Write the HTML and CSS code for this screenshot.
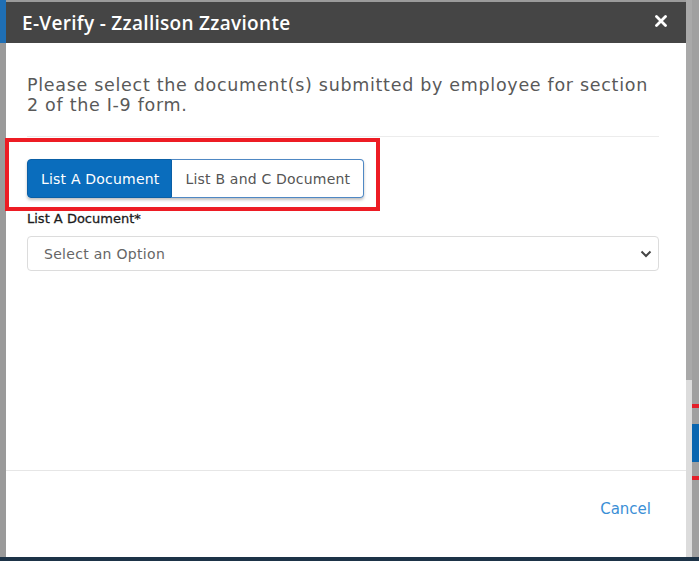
FILE: index.html
```html
<!DOCTYPE html>
<html lang="en">
<head>
    <meta charset="UTF-8">
    <title>E-Verify</title>
    <link rel="stylesheet" href="styles.css">
</head>
<body>
    <div class="page">
        <div class="backdrop-left"></div>

        <div class="modal">
            <div class="modal-header">
                <h2>E-Verify - Zzallison Zzavionte</h2>
                <svg class="close" width="12" height="12" viewBox="0 0 12 12"><path d="M1.5 1.5 L10.5 10.5 M10.5 1.5 L1.5 10.5" stroke="#fff" stroke-width="2.8" stroke-linecap="round"/></svg>
            </div>

            <div class="modal-body">
                <p class="intro">Please select the document(s) submitted by employee for section 2 of the I-9 form.</p>
                <hr>

                <div class="btn-group">
                    <button class="active">List A Document</button>
                    <button>List B and C Document</button>
                </div>

                <label for="doc">List A Document*</label>
                <div class="select">
                    <span>Select an Option</span>
                    <svg width="12" height="8" viewBox="0 0 12 8"><path d="M1.5 1.5 L6 6 L10.5 1.5" fill="none" stroke="#444" stroke-width="2"/></svg>
                </div>

                <!-- annotation -->
                <div class="highlight"></div>
            </div>

            <div class="modal-footer">
                <a href="#" class="cancel">Cancel</a>
            </div>
        </div>

        <div class="scrollbar"><div class="thumb"></div></div>
        <div class="backdrop-right">
            <div class="mark red m1"></div>
            <div class="mark blue"></div>
            <div class="mark red m2"></div>
        </div>
    </div>
    <div class="bottom-bar"></div>
</body>
</html>
```

FILE: styles.css
```css
body {
    margin: 0;
    font-family: "DejaVu Sans", "Open Sans", sans-serif;
    background-color: #9b9b9b;
    overflow: hidden;
}
.page {
    display: flex;
    height: 557px;
}
.backdrop-left {
    width: 6px;
    background: linear-gradient(#1f6fb5 0, #1f6fb5 43px, #9a9a9a 43px);
}
.modal {
    width: 680px;
    margin-top: 2px;
    background-color: #fff;
    display: flex;
    flex-direction: column;
}
.modal-header {
    height: 41px;
    background-color: #454545;
    display: flex;
    align-items: center;
    justify-content: space-between;
    padding: 0 19px 0 16px;
    flex-shrink: 0;
}
.modal-header h2 {
    margin: 0;
    color: #fff;
    font-family: "Open Sans", sans-serif;
    font-size: 19px;
    font-weight: 600;
    letter-spacing: 0.3px;
}
.close {
    margin-top: -4px;
}
.modal-body {
    position: relative;
    flex: 1;
    padding: 32px 27px 0 21px;
}
.intro {
    margin: 0;
    font-size: 17.5px;
    line-height: 20px;
    color: #595959;
    letter-spacing: 0.7px;
}
hr {
    border: none;
    border-top: 1px solid #ececec;
    margin: 21px 0 22px;
}
.btn-group {
    display: inline-flex;
    border-radius: 4px;
    box-shadow: 0 2px 3px rgba(0, 0, 0, 0.25);
}
.btn-group button {
    font-family: inherit;
    font-size: 14px;
    letter-spacing: 0.2px;
    height: 39px;
    padding: 0 13px;
    background-color: #fff;
    color: #555;
    border: 1px solid #4f88c4;
    border-left: none;
    border-radius: 0 4px 4px 0;
    cursor: pointer;
}
.btn-group button.active {
    background-color: #0a6dbd;
    color: #fff;
    border: 1px solid #0a5fa6;
    border-radius: 4px 0 0 4px;
    padding: 0 12px 0 13px;
}
label {
    display: block;
    margin-top: 12px;
    font-size: 13px;
    color: #1c1c1c;
    line-height: 18px;
    -webkit-text-stroke: 0.3px #1c1c1c;
}
.select {
    margin-top: 8px;
    height: 35px;
    border: 1px solid #dcdcdc;
    border-radius: 4px;
    display: flex;
    align-items: center;
    justify-content: space-between;
    padding: 0 6px 0 16px;
    box-sizing: border-box;
    font-size: 14px;
    letter-spacing: 0.3px;
    color: #666;
}
.highlight {
    position: absolute;
    left: -1px;
    top: 95px;
    width: 367px;
    height: 65px;
    border: 4px solid #ed1c24;
}
.modal-footer {
    height: 87px;
    border-top: 1px solid #e6e6e6;
    display: flex;
    justify-content: flex-end;
    padding: 28px 35px 0 0;
    box-sizing: border-box;
    flex-shrink: 0;
}
.cancel {
    color: #3b8fd6;
    text-decoration: none;
    font-size: 15px;
    line-height: 20px;
    align-self: flex-start;
}
.scrollbar {
    width: 6px;
    background-color: #dcdcdc;
}
.thumb {
    height: 380px;
    background-color: #a9a9a9;
}
.backdrop-right {
    flex: 1;
    position: relative;
    background-color: #a0a0a0;
}
.mark {
    position: absolute;
    left: 0;
    right: 0;
}
.mark.red {
    height: 4px;
    background-color: #e4202a;
}
.m1 {
    top: 404px;
}
.m2 {
    top: 476px;
}
.mark.blue {
    top: 424px;
    height: 38px;
    background-color: #0a66b0;
}
.bottom-bar {
    height: 4px;
    background-color: #1d3347;
}
```
